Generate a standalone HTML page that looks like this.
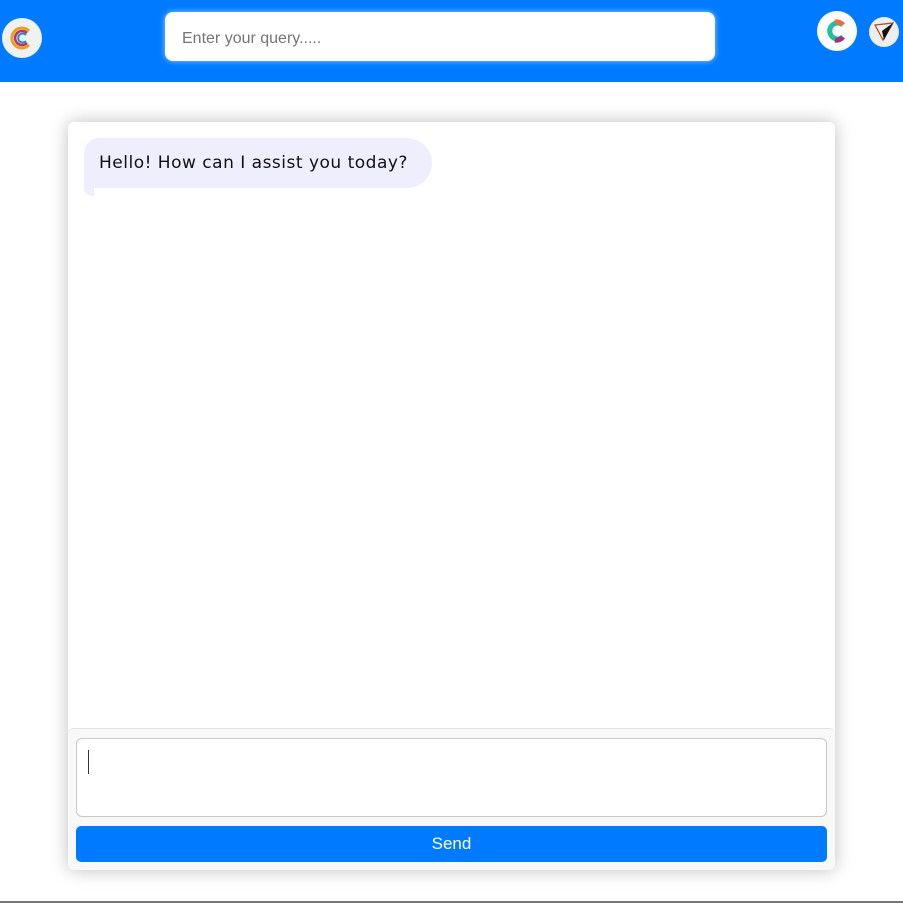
<!DOCTYPE html>
<html><head><meta charset="utf-8"><style>
*{box-sizing:border-box;margin:0;padding:0}
body{width:903px;height:903px;background:#fff;position:relative;overflow:hidden;font-family:"Liberation Sans",sans-serif}
.hdr{position:absolute;left:0;top:0;width:903px;height:82px;background:#007bff}
.logo{position:absolute;border-radius:50%}
.search{position:absolute;left:165px;top:12px;width:550px;height:49px;background:#fff;border-radius:8px;box-shadow:0 0 6px rgba(255,255,255,.6);font-size:16px;color:#757575;padding:18px 0 0 17px}
.card{position:absolute;left:68px;top:122px;width:767px;height:748px;background:#fff;border-radius:6px;box-shadow:0 0 18px rgba(0,0,0,.25);overflow:hidden}
.bubble{position:absolute;left:16px;top:16px;width:348px;height:50px;background:#efeefc;border-radius:15px 25px 25px 0;font-family:"DejaVu Sans",sans-serif;font-size:17px;letter-spacing:0.5px;color:#111;padding:15px 0 0 15px;white-space:nowrap}
.tail{position:absolute;left:16px;top:60px;width:10px;height:14px;background:#efeefc;border-radius:0 0 0 8px}
.foot{position:absolute;left:0;top:606px;width:767px;height:142px;background:#f8f8f8;border-top:1px solid #e2e2e2;border-radius:6px 6px 0 0}
.ta{position:absolute;left:8px;top:9px;width:751px;height:79px;background:#fff;border:1px solid #c8c8c8;border-radius:6px}
.caret{position:absolute;left:11px;top:11px;width:1px;height:24px;background:#333}
.btn{position:absolute;left:8px;top:97px;width:751px;height:36px;background:#007bff;border-radius:5px;color:#fff;font-size:17px;text-align:center;line-height:36px}
.line{position:absolute;left:0;top:901px;width:903px;height:2px;background:#777}
</style></head><body>
<div class="hdr">
 <div class="logo" style="left:2px;top:18px;width:40px;height:40px;background:#f0f2f2">
  <svg width="40" height="40" viewBox="0 0 40 40"><path d="M27 13a10 10 0 1 0 0 14" fill="none" stroke="#e8a020" stroke-width="3"/><path d="M25 15a7 7 0 1 0 0 10" fill="none" stroke="#c0306a" stroke-width="2.5"/><path d="M24 17a4.5 4.5 0 1 0 0 6" fill="none" stroke="#2090c0" stroke-width="2"/></svg>
 </div>
 <div class="search">Enter your query.....</div>
 <div class="logo" style="left:817px;top:11px;width:40px;height:40px;background:#fff">
  <svg width="40" height="40" viewBox="0 0 40 40"><path d="M26 14a8 8 0 1 0 0 12" fill="none" stroke="#20c0a0" stroke-width="5"/><path d="M26 14a8 8 0 0 0-8-3" fill="none" stroke="#e87040" stroke-width="5"/><path d="M26 26a8 8 0 0 1-8 3" fill="none" stroke="#a03080" stroke-width="5"/></svg>
 </div>
 <div class="logo" style="left:869px;top:17px;width:30px;height:30px;background:#eee">
  <svg width="30" height="30" viewBox="0 0 30 30"><path d="M6 8L14 23L24 6Z" fill="none" stroke="#b05020" stroke-width="1.3"/><path d="M13 14L24 6L15 23Z" fill="#111"/></svg>
 </div>
</div>
<div class="card">
 <div class="tail"></div>
 <div class="bubble">Hello! How can I assist you today?</div>
 <div class="foot">
  <div class="ta"><div class="caret"></div></div>
  <div class="btn">Send</div>
 </div>
</div>
<div class="line"></div>
</body></html>
